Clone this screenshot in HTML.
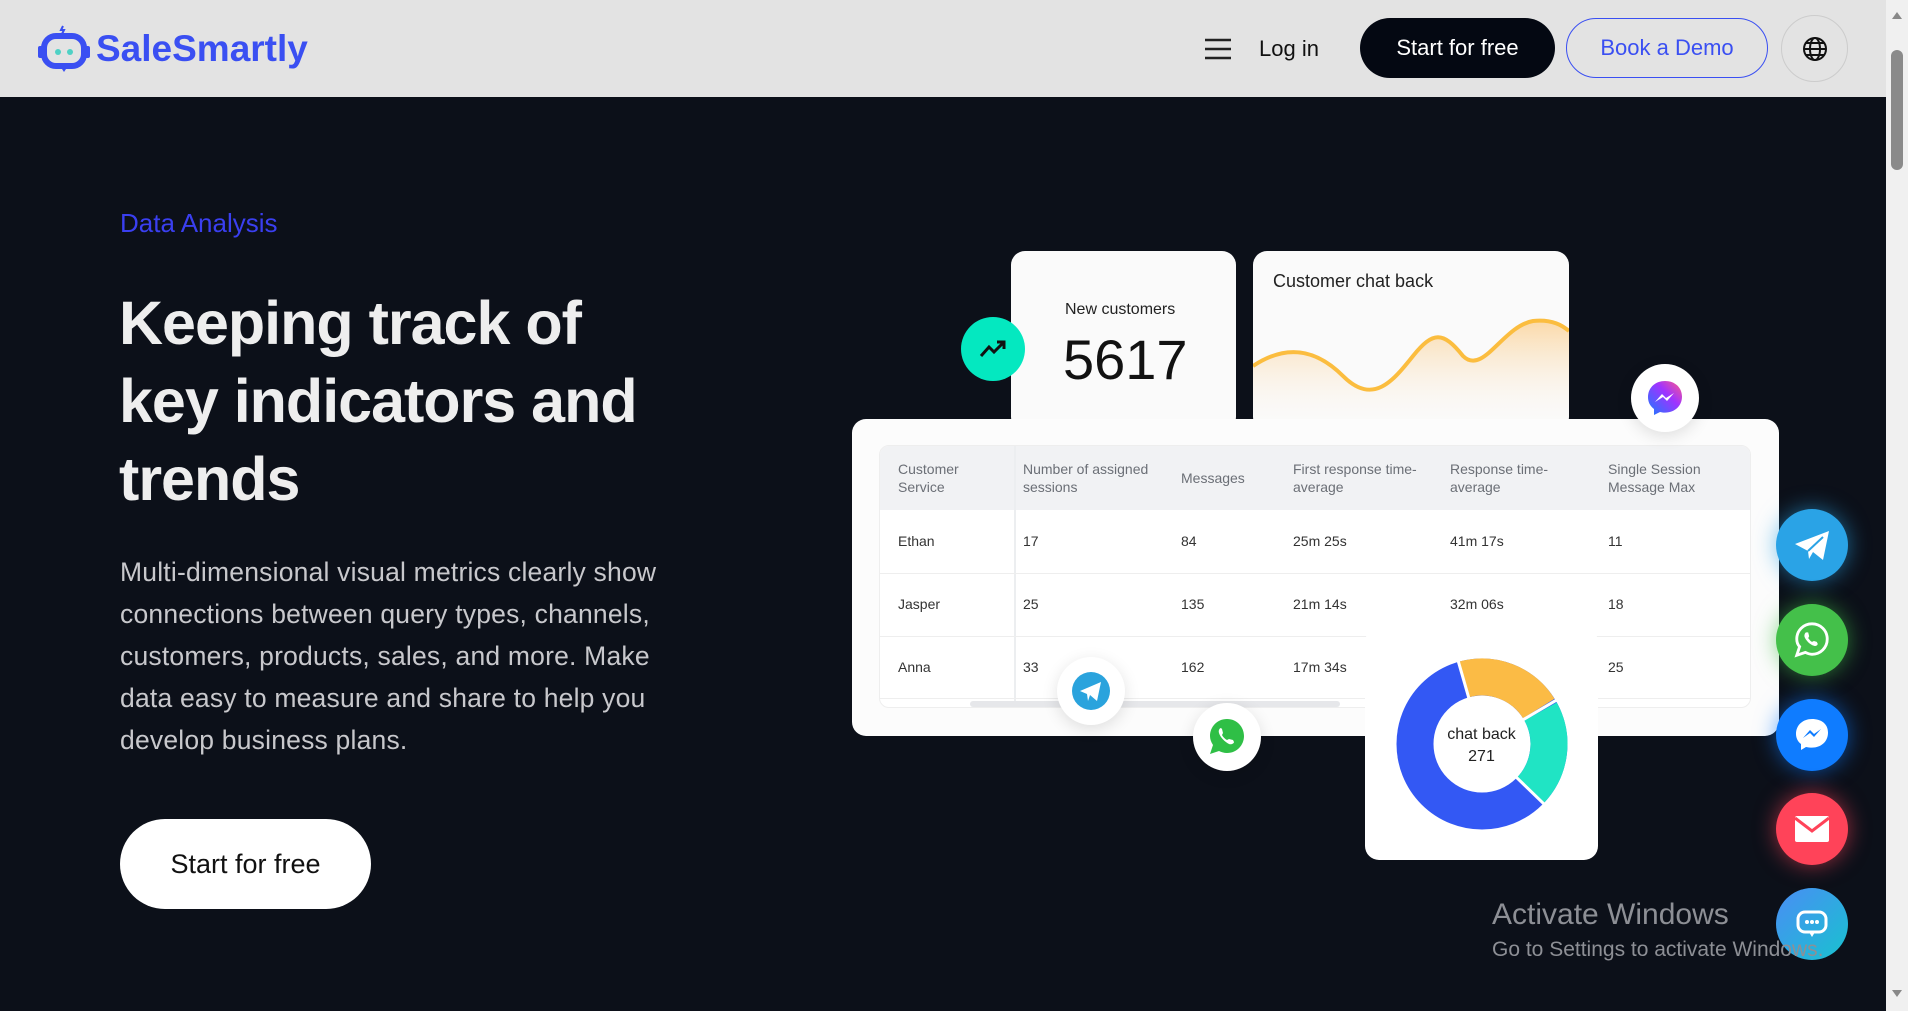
<!DOCTYPE html>
<html><head><meta charset="utf-8">
<style>
*{margin:0;padding:0;box-sizing:border-box}
html,body{width:1908px;height:1011px;overflow:hidden;background:#0c1019;font-family:"Liberation Sans",sans-serif}
.hdr{position:absolute;left:0;top:0;width:1886px;height:97px;background:#e3e3e3}
.sb{position:absolute;right:0;top:0;width:22px;height:1011px;background:#f0f0f0}
.sb .th{position:absolute;left:5px;top:50px;width:12px;height:120px;background:#8a8a8a;border-radius:6px}
.abs{position:absolute}
.btn{position:absolute;border-radius:40px;display:flex;align-items:center;justify-content:center;font-size:22px}
.card{position:absolute;background:#fafafa;border-radius:14px}
.tbl{position:absolute;left:879px;top:445px;width:872px;height:263px;background:#fff;border-radius:10px;border:1px solid #eee;overflow:hidden}
.tbl .h{position:absolute;left:0;top:0;width:100%;height:64px;background:#f1f2f4}
.cell{position:absolute;font-size:14px;color:#333;line-height:18px}
.hc{color:#6b6f76}
.fl{position:absolute;width:72px;height:72px;border-radius:50%;display:flex;align-items:center;justify-content:center}
.wc{position:absolute;background:#fff;border-radius:50%;box-shadow:0 4px 16px rgba(0,0,0,.12);display:flex;align-items:center;justify-content:center}
</style></head><body>
<div class="hdr">
  <svg class="abs" style="left:36px;top:24px" width="56" height="50" viewBox="0 0 56 50">
    <path d="M27 2 l-2 4 h3 l-2 4" stroke="#3a4ff2" stroke-width="2" fill="none"/>
    <rect x="8" y="12" width="40" height="30" rx="12" fill="none" stroke="#3a4ff2" stroke-width="6"/>
    <rect x="2" y="22" width="6" height="12" rx="2" fill="#3a4ff2"/><rect x="48" y="22" width="6" height="12" rx="2" fill="#3a4ff2"/>
    <circle cx="22" cy="28" r="3" fill="#4fd1c5"/><circle cx="34" cy="28" r="3" fill="#4fd1c5"/>
    <path d="M24 42 l4 6 l4-6z" fill="#3a4ff2"/>
  </svg>
  <div class="abs" style="left:96px;top:28px;font-size:37px;font-weight:bold;color:#3a4ff2;letter-spacing:0px">SaleSmartly</div>
  <svg class="abs" style="left:1204px;top:38px" width="28" height="22"><path d="M1 2h26M1 11h26M1 20h26" stroke="#222" stroke-width="2.5"/></svg>
  <div class="abs" style="left:1259px;top:36px;font-size:22px;color:#111">Log in</div>
  <div class="btn" style="left:1360px;top:18px;width:195px;height:60px;background:#040812;color:#fff">Start for free</div>
  <div class="btn" style="left:1566px;top:18px;width:202px;height:60px;border:1.5px solid #3a4ff2;color:#3a4ff2">Book a Demo</div>
  <div class="btn" style="left:1781px;top:15px;width:67px;height:67px;border:1px solid #ccc">
    <svg width="26" height="26" viewBox="0 0 26 26" fill="none" stroke="#111" stroke-width="2"><circle cx="13" cy="13" r="11"/><ellipse cx="13" cy="13" rx="5" ry="11"/><path d="M2 13h22M4 7h18M4 19h18"/></svg>
  </div>
</div>
<div class="sb"><div class="th"></div><div class="abs" style="left:6px;top:12px;border:5px solid transparent;border-bottom:7px solid #888;border-top:0"></div><div class="abs" style="left:6px;top:990px;border:5px solid transparent;border-top:7px solid #888;border-bottom:0"></div></div>

<div class="abs" style="left:120px;top:208px;font-size:26px;color:#3a3ff0">Data Analysis</div>
<div class="abs" style="left:119px;top:284px;font-size:61px;font-weight:bold;color:#eee;line-height:78px;letter-spacing:-1px">Keeping track of<br>key indicators and<br>trends</div>
<div class="abs" style="left:120px;top:551px;width:580px;font-size:26.5px;color:#c8c8cc;line-height:42px;letter-spacing:0.2px">Multi-dimensional visual metrics clearly show<br>connections between query types, channels,<br>customers, products, sales, and more. Make<br>data easy to measure and share to help you<br>develop business plans.</div>
<div class="btn" style="left:120px;top:819px;width:251px;height:90px;background:#fff;color:#111;font-size:27px;border-radius:45px">Start for free</div>

<!-- cards -->
<div class="card" style="left:1011px;top:251px;width:225px;height:180px">
  <div class="abs" style="left:54px;top:50px;font-size:16px;color:#222">New customers</div>
  <div class="abs" style="left:52px;top:76px;font-size:56px;color:#111">5617</div>
</div>
<div class="card" style="left:1253px;top:251px;width:316px;height:180px;overflow:hidden">
  <div class="abs" style="left:20px;top:20px;font-size:18px;color:#222">Customer chat back</div>
  <svg class="abs" style="left:0;top:60px" width="316" height="120" viewBox="0 0 316 120">
    <defs><linearGradient id="g" x1="0" y1="0" x2="0" y2="1"><stop offset="0" stop-color="#fbd9a8"/><stop offset="1" stop-color="#fafafa" stop-opacity="0"/></linearGradient></defs>
    <path d="M0 55 C30 35 60 35 90 65 C120 95 140 70 160 45 C180 20 190 20 210 45 C230 65 250 15 280 10 C300 8 310 15 316 20 L316 120 L0 120Z" fill="url(#g)"/>
    <path d="M0 55 C30 35 60 35 90 65 C120 95 140 70 160 45 C180 20 190 20 210 45 C230 65 250 15 280 10 C300 8 310 15 316 20" fill="none" stroke="#fbbd3f" stroke-width="4"/>
  </svg>
</div>
<div class="fl" style="left:961px;top:317px;width:64px;height:64px;background:#04e8c0"><svg width="28" height="20"><path d="M2 17 L10 8 L15 13 L25 3 M18 3h7v7" stroke="#111" stroke-width="3" fill="none"/></svg></div>

<div class="card" style="left:852px;top:419px;width:927px;height:317px;background:#fcfcfc"></div>
<div class="tbl">
  <div class="h"></div>
  <div class="abs" style="left:134px;top:0;width:2px;height:263px;background:#eceef0"></div>
  <div class="abs" style="left:0;top:127px;width:100%;height:1px;background:#eee"></div>
  <div class="abs" style="left:0;top:190px;width:100%;height:1px;background:#eee"></div>
  <div class="abs" style="left:0;top:252px;width:100%;height:1px;background:#eee"></div>
  <div class="abs" style="left:90px;top:255px;width:370px;height:6px;border-radius:3px;background:#e6e7ea"></div>
  <div class="cell hc" style="left:18px;top:14px">Customer<br>Service</div>
  <div class="cell hc" style="left:143px;top:14px">Number of assigned<br>sessions</div>
  <div class="cell hc" style="left:301px;top:23px">Messages</div>
  <div class="cell hc" style="left:413px;top:14px">First response time-<br>average</div>
  <div class="cell hc" style="left:570px;top:14px">Response time-<br>average</div>
  <div class="cell hc" style="left:728px;top:14px">Single Session<br>Message Max</div>
  <div class="cell" style="left:18px;top:86px">Ethan</div><div class="cell" style="left:143px;top:86px">17</div><div class="cell" style="left:301px;top:86px">84</div><div class="cell" style="left:413px;top:86px">25m 25s</div><div class="cell" style="left:570px;top:86px">41m 17s</div><div class="cell" style="left:728px;top:86px">11</div>
  <div class="cell" style="left:18px;top:149px">Jasper</div><div class="cell" style="left:143px;top:149px">25</div><div class="cell" style="left:301px;top:149px">135</div><div class="cell" style="left:413px;top:149px">21m 14s</div><div class="cell" style="left:570px;top:149px">32m 06s</div><div class="cell" style="left:728px;top:149px">18</div>
  <div class="cell" style="left:18px;top:212px">Anna</div><div class="cell" style="left:143px;top:212px">33</div><div class="cell" style="left:301px;top:212px">162</div><div class="cell" style="left:413px;top:212px">17m 34s</div><div class="cell" style="left:728px;top:212px">25</div>
</div>

<div class="wc" style="left:1631px;top:364px;width:68px;height:68px">
  <svg width="40" height="40" viewBox="0 0 40 40"><defs><linearGradient id="m" x1="0" y1="1" x2="1" y2="0"><stop offset="0" stop-color="#1a7bff"/><stop offset=".6" stop-color="#a033ff"/><stop offset="1" stop-color="#ff5c87"/></linearGradient></defs><path d="M20 3C10 3 3 10 3 19c0 5 2 9 6 12v6l6-3c2 .5 3 .6 5 .6 10 0 17-7 17-16S30 3 20 3z" fill="url(#m)"/><path d="M10 24l7-8 4 4 8-5-7 8-4-4z" fill="#fff"/></svg>
</div>

<div class="wc" style="left:1057px;top:657px;width:68px;height:68px">
  <svg width="40" height="40" viewBox="0 0 40 40"><circle cx="20" cy="20" r="19" fill="#2aa3dd"/><path d="M9 20 L30 11 L26 30 L19 24 L17 30 L16 23 Z" fill="#fff"/></svg>
</div>
<div class="wc" style="left:1193px;top:703px;width:68px;height:68px">
  <svg width="42" height="42" viewBox="0 0 42 42"><path d="M21 3C11 3 4 11 4 20c0 3 1 6 3 9L4 38l9-3c2 1 5 2 8 2 10 0 17-8 17-17S31 3 21 3z" fill="#2fbf46"/><path d="M15 12c-1 0-3 2-2 5 1 4 6 9 10 11 3 1 5-1 5-2l-1-2-4-1-2 1c-2-1-4-3-5-5l1-2-1-4z" fill="#fff"/></svg>
</div>

<div class="card" style="left:1365px;top:628px;width:233px;height:232px;background:#fff">
  <svg class="abs" style="left:31px;top:30px" width="172" height="172" viewBox="-86 -86 172 172">
    <circle r="67" fill="none" stroke="#3358f4" stroke-width="37"/>
    <path d="M-18.5 -64.4 A67 67 0 0 1 56.8 -35.5" fill="none" stroke="#fbbb45" stroke-width="37"/>
    <path d="M58.6 -32.5 A67 67 0 0 1 48.2 46.5" fill="none" stroke="#20e4c4" stroke-width="37"/>
    <g stroke="#fff" stroke-width="3">
      <line x1="-13.2" y1="-46.1" x2="-23.7" y2="-82.7"/>
      <line x1="41.4" y1="-24.4" x2="74.1" y2="-43.7"/>
      <line x1="34.5" y1="33.4" x2="61.8" y2="59.8"/>
    </g>
  </svg>
  <div class="abs" style="left:0;width:233px;top:96px;text-align:center;font-size:16px;color:#222;line-height:22px">chat back<br>271</div>
</div>

<!-- right floating -->
<div class="fl" style="left:1776px;top:509px;background:#2aa3e6;box-shadow:0 0 22px rgba(42,163,230,.6)"><svg width="40" height="36"><path d="M3 17 L37 4 L31 33 L21 25 L17 32 L16 24 Z" fill="#fff"/><path d="M16 24 L31 10" stroke="#2aa3e6" stroke-width="2"/></svg></div>
<div class="fl" style="left:1776px;top:604px;background:#44c04a;box-shadow:0 0 22px rgba(68,192,74,.6)"><svg width="40" height="40" viewBox="0 0 42 42"><path d="M21 4C12 4 5 11 5 20c0 3 1 6 3 8l-3 9 9-3c2 1 5 2 7 2 9 0 16-7 16-16S30 4 21 4z" fill="none" stroke="#fff" stroke-width="3"/><path d="M15 13c-1 0-2 2-2 4 1 4 6 9 10 10 3 1 4-1 4-2l-1-2-3-1-2 1c-2-1-3-3-4-4l1-2-1-4z" fill="#fff"/></svg></div>
<div class="fl" style="left:1776px;top:699px;background:#0f7cff;box-shadow:0 0 22px rgba(15,124,255,.6)"><svg width="40" height="40" viewBox="0 0 40 40"><path d="M20 4C11 4 4 10 4 19c0 4 2 8 5 10v6l5-3c2 .5 4 .6 6 .6 9 0 16-6 16-15S29 4 20 4z" fill="#fff"/><path d="M11 23l7-8 4 4 7-5-7 8-4-4z" fill="#0f7cff"/></svg></div>
<div class="fl" style="left:1776px;top:793px;background:#ff4359;box-shadow:0 0 22px rgba(255,67,89,.6)"><svg width="36" height="28"><rect x="1" y="1" width="34" height="26" rx="2" fill="#fff"/><path d="M1 3 L18 16 L35 3" stroke="#ff4359" stroke-width="3" fill="none"/></svg></div>
<div class="fl" style="left:1776px;top:888px;background:linear-gradient(135deg,#4a8df5,#18c2cf)"><svg width="36" height="34"><rect x="4" y="5" width="28" height="20" rx="7" fill="none" stroke="#fff" stroke-width="3"/><circle cx="13" cy="15" r="2" fill="#fff"/><circle cx="18" cy="15" r="2" fill="#fff"/><circle cx="23" cy="15" r="2" fill="#fff"/><path d="M15 25 l3 5 l3-5" fill="#fff"/></svg></div>

<div class="abs" style="left:1492px;top:898px;font-size:30px;color:#8d8f95">Activate Windows</div>
<div class="abs" style="left:1492px;top:938px;font-size:21px;color:#8d8f95">Go to Settings to activate Windows.</div>
</body></html>
